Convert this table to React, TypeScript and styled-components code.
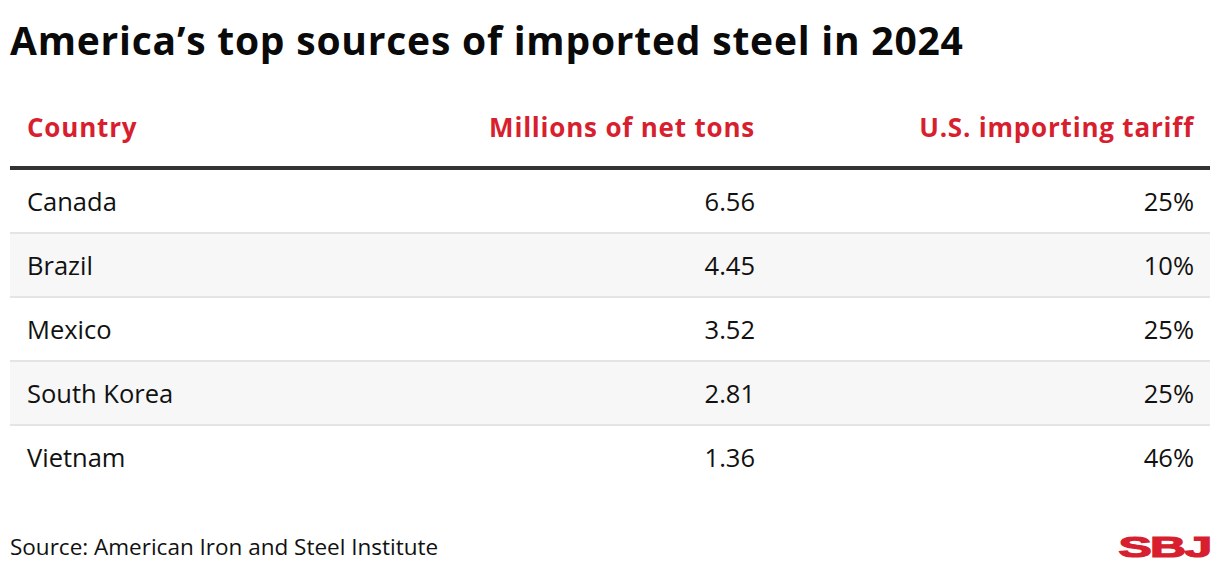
import React from "react";
import styled, { createGlobalStyle } from "styled-components";

const Global = createGlobalStyle`
  html, body { margin: 0; padding: 0; background: #fff; }
  body { font-family: "Open Sans", sans-serif; color: #111; }
`;

const Page = styled.div`
  width: 1220px;
  height: 574px;
  box-sizing: border-box;
  padding: 16px 10px 0 10px;
  display: flex;
  flex-direction: column;
`;

const Title = styled.h1`
  margin: 0;
  font-family: "Open Sans", sans-serif;
  font-weight: 700;
  font-size: 39px;
  line-height: 48px;
  color: #0a0a0a;
  letter-spacing: 0.78px;
`;

const Table = styled.div`
  margin-top: 42px;
  display: flex;
  flex-direction: column;
`;

const Row = styled.div<{ $shade?: boolean; $head?: boolean; $last?: boolean }>`
  display: grid;
  grid-template-columns: 347px 381px 1fr;
  align-items: center;
  height: ${(p) => (p.$head ? "42px" : "62px")};
  padding: 0 16px 0 17px;
  background: ${(p) => (p.$shade ? "#f7f7f7" : "#fff")};
  border-bottom: ${(p) =>
    p.$head ? "4px solid #333" : p.$last ? "none" : "2px solid #e4e4e4"};
  padding-bottom: ${(p) => (p.$head ? "18px" : "0")};
`;

const Cell = styled.div<{ $right?: boolean; $head?: boolean }>`
  text-align: ${(p) => (p.$right ? "right" : "left")};
  font-family: "Open Sans", sans-serif;
  font-size: ${(p) => (p.$head ? "26px" : "25.5px")};
  font-weight: ${(p) => (p.$head ? 700 : 400)};
  letter-spacing: ${(p) => (p.$head ? "0.8px" : "0")};
  color: ${(p) => (p.$head ? "#d71f2f" : "#111")};
`;

const Footer = styled.div`
  margin-top: auto;
  height: 40px;
  display: flex;
  justify-content: space-between;
  align-items: flex-start;
`;

const Source = styled.div`
  font-family: "Open Sans", sans-serif;
  font-size: 22.5px;
  color: #111;
  line-height: 26px;
`;

const Logo = styled.div`
  font-family: "Liberation Sans", "Arial", sans-serif;
  font-weight: 900;
  font-size: 29px;
  line-height: 22px;
  color: #d71f2f;
  letter-spacing: -1px;
  transform: scaleX(1.72);
  transform-origin: right center;
  margin-top: 2px;
  -webkit-text-stroke: 1.2px #d71f2f;
`;

const data = [
  ["Canada", "6.56", "25%"],
  ["Brazil", "4.45", "10%"],
  ["Mexico", "3.52", "25%"],
  ["South Korea", "2.81", "25%"],
  ["Vietnam", "1.36", "46%"],
];

export default function App() {
  return (
    <>
      <Global />
      <Page>
        <Title>America’s top sources of imported steel in 2024</Title>
        <Table>
          <Row $head>
            <Cell $head>Country</Cell>
            <Cell $head $right>
              Millions of net tons
            </Cell>
            <Cell $head $right>
              U.S. importing tariff
            </Cell>
          </Row>
          {data.map((r, i) => (
            <Row key={r[0]} $shade={i % 2 === 1} $last={i === data.length - 1}>
              <Cell>{r[0]}</Cell>
              <Cell $right>{r[1]}</Cell>
              <Cell $right>{r[2]}</Cell>
            </Row>
          ))}
        </Table>
        <Footer>
          <Source>Source: American Iron and Steel Institute</Source>
          <Logo>SBJ</Logo>
        </Footer>
      </Page>
    </>
  );
}
